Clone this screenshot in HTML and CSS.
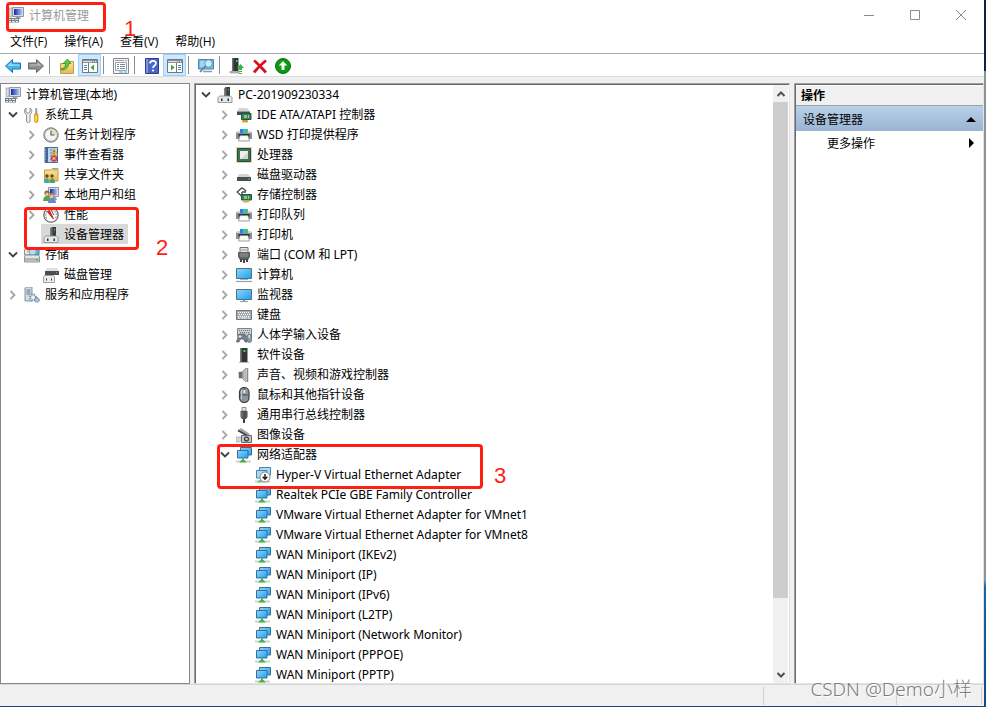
FILE: index.html
```html
<!DOCTYPE html>
<html lang="zh-CN">
<head>
    <meta charset="UTF-8">
    <meta name="viewport" content="width=device-width, initial-scale=1.0">
    <title>计算机管理</title>
    <link rel="stylesheet" href="styles.css">
</head>
<body>
    <svg class="sprite" aria-hidden="true">
        <defs>
            <linearGradient id="blue" x1="0" y1="0" x2="1" y2="1"><stop offset="0" stop-color="#8fd3fb"/><stop offset="1" stop-color="#1ea0f2"/></linearGradient>
            <linearGradient id="navy" x1="0" y1="0" x2="1" y2="0"><stop offset="0" stop-color="#1226a8"/><stop offset="1" stop-color="#a9c6f5"/></linearGradient>
            <linearGradient id="metal" x1="0" y1="0" x2="1" y2="0"><stop offset="0" stop-color="#5c5c5c"/><stop offset="1" stop-color="#d8d8d8"/></linearGradient>
            <linearGradient id="gold" x1="0" y1="0" x2="0" y2="1"><stop offset="0" stop-color="#fbe7a2"/><stop offset="1" stop-color="#e6bb52"/></linearGradient>
        </defs>
        <symbol id="open" viewBox="0 0 16 16"><path d="M4 5.500l4 4 4-4" fill="none" stroke="#404040" stroke-width="1.8"/></symbol>
        <symbol id="closed" viewBox="0 0 16 16"><path d="M5.500 4l4 4-4 4" fill="none" stroke="#a6a6a6" stroke-width="1.800"/></symbol>
        <symbol id="computer" viewBox="0 0 16 16">
            <path d="M1 1h3v9H1z" fill="#d9dde2" stroke="#8b9299" stroke-width=".6"/>
            <path d="M4.500.5h11v9h-11z" fill="#d8dde3" stroke="#8f979f"/><path d="M6 2h8v6H6z" fill="url(#navy)"/>
            <path d="M8 10h4l1 2H7z" fill="#9aa1a8"/><path d="M0 11h11v4.500H0z" fill="#777e85"/><path d="M1 12h2v1H1zm3 0h2v1H4zm3 0h3v1H7zM1 14h2v1H1zm3 0h3v1H4zm4 0h2v1H8z" fill="#e5e8eb"/>
        </symbol>
        <symbol id="tools" viewBox="0 0 16 16">
            <path d="M2 1v4l2 1.500 2-1.500V1c2 1 2.500 4 .7 6L6 8v6.500c0 1.300-3.500 1.300-3.500 0V8L1.500 7C0 5 .3 2 2 1z" fill="#eceeef" stroke="#7d8489" stroke-width=".9"/>
            <path d="M11.500 1.500h1.500v6h-1.500z" fill="#a5a9ad" stroke="#777" stroke-width=".4"/><path d="M10.500 7h3.500v7.500l-1 1h-1.500l-1-1z" fill="#f7b816" stroke="#c98c06" stroke-width=".7"/><path d="M12 9v5" stroke="#fff0a0"/>
        </symbol>
        <symbol id="clock" viewBox="0 0 16 16"><circle cx="8" cy="8" r="7.200" fill="#b5b5b5" stroke="#7d7d7d"/><circle cx="8" cy="8" r="5.800" fill="#f2f4f6"/><path d="M8 8V2.400A5.600 5.600 0 0 1 13.600 8z" fill="#f0dfb4"/><path d="M8 3.500V8h3.500" fill="none" stroke="#555" stroke-width="1.100"/></symbol>
        <symbol id="events" viewBox="0 0 16 16"><path d="M2 .5h12.500v15H2z" fill="#b8d5f2" stroke="#466a9c"/><path d="M2 1h3v14H2z" fill="#46659c"/><path d="M1 3h2M1 6h2M1 9h2M1 12h2" stroke="#a8bdd6"/><path d="M7 3h2M7 6h2M7 9h2M7 12h2" stroke="#5379b5"/><path d="M11 1.500l3.500 6h-6z" fill="#f9cf34" stroke="#c29413" stroke-width=".5"/><path d="M11 3.500v2M11 6.200v.8" stroke="#333"/><circle cx="11" cy="11.500" r="3.200" fill="#d93e3a"/><path d="M9.800 10.300l2.400 2.400m0-2.400l-2.400 2.400" stroke="#fff"/></symbol>
        <symbol id="shared" viewBox="0 0 16 16"><path d="M1.500 3h7l1-1.500h5.500V14H1.500z" fill="url(#gold)" stroke="#c69a38"/><path d="M10 3h4" stroke="#67a5da"/><circle cx="4" cy="9" r="1.700" fill="#6e4227"/><circle cx="9" cy="9" r="1.700" fill="#6e4227"/><path d="M1 16c0-6.500 5.500-6.500 5.500 0z" fill="#49a3ae"/><path d="M6.500 16c0-6.500 5.500-6.500 5.500 0z" fill="#4ba560"/></symbol>
        <symbol id="users" viewBox="0 0 16 16"><path d="M5.500.5h10v9h-10z" fill="#d8dde3" stroke="#8f979f"/><path d="M7 2h7v6H7z" fill="url(#navy)"/><path d="M9 10h4l1 3H9z" fill="#9aa1a8"/><circle cx="4" cy="6" r="2.600" fill="#8d6039"/><circle cx="4" cy="7" r="1.600" fill="#f1c8a3"/><path d="M0 14c0-7 8-7 8 0z" fill="#57a455"/><circle cx="9" cy="8" r="2.300" fill="#ac7a35"/><circle cx="9" cy="9" r="1.500" fill="#f1c8a3"/><path d="M5 16c0-7 8-7 8 0z" fill="#6789c8"/></symbol>
        <symbol id="gauge" viewBox="0 0 16 16"><circle cx="8" cy="8" r="7.200" fill="#fff" stroke="#666" stroke-width="1.200"/><path d="M3.700 11.500a5.400 5.400 0 1 1 8.600 0" fill="none" stroke="#aaa" stroke-width="1.500" stroke-dasharray="2 1"/><path d="M4.500 4.500l6 7.500L6.500 4z" fill="#d32020" stroke="#d32020" stroke-width="1.200"/><path d="M8 3l3 5" stroke="#555"/></symbol>
        <symbol id="device" viewBox="0 0 16 16"><path d="M7.500 1l2-1H13v9H7.500z" fill="#3b3e40"/><path d="M7.500 1l2-1v9h-2z" fill="#696d70"/><path d="M11 2h1v1.500h-1z" fill="#29e339"/><path d="M2.500 9h11l1.500 1.500V15.500H1v-5z" fill="#e6e7e8" stroke="#858789" stroke-width=".8"/><path d="M4 11.500h1.500V14H4zm6.500 0H12V14h-1.500z" fill="#333"/></symbol>
        <symbol id="storage" viewBox="0 0 16 16"><path d="M.5 3l2-2h8v7h-10z" fill="#e9eaeb" stroke="#8b8e90"/><path d="M3 1h4v5H3z" fill="#bfc3c5"/><path d="M6 2.500h9V8H6z" fill="#59b8e8" stroke="#3d799a"/><circle cx="8.500" cy="5" r="3" fill="#c7e7f4" opacity=".8"/><path d="M1.500 8h13l1 2v5H.5v-5z" fill="#e4e5e6" stroke="#777a7d" stroke-width=".8"/><path d="M1 11h14v3.500H1z" fill="#b5b8ba"/><path d="M12 12h2v1.500h-2z" fill="#28d136"/></symbol>
        <symbol id="disks" viewBox="0 0 16 16"><path d="M4 1h10l2 4v3H2V5z" fill="#dedfe0"/><path d="M2 4h14v4H2z" fill="#4b4e50"/><path d="M13 5h1v1h-1z" fill="#29dc38"/><path d="M1.500 8.500h9l1 1.500v5.500H.5v-5.500z" fill="#ececec" stroke="#898b8d" stroke-width=".8"/><path d="M3 11.500h1v2H3zm5 0h1v2H8z" fill="#333"/></symbol>
        <symbol id="services" viewBox="0 0 16 16"><path d="M1 1l1.500-1H8v14H1z" fill="#d4dee7" stroke="#6c7a87" stroke-width=".8"/><path d="M2.500 3h4M2.500 5h4M2.500 7h4" stroke="#597287"/><circle cx="9" cy="10.500" r="3" fill="#d8e6f1" stroke="#7592aa" stroke-width="2" stroke-dasharray="1.400 1"/><circle cx="13" cy="13" r="2" fill="#b9d2e7" stroke="#5c8bb5" stroke-width="1.500" stroke-dasharray="1 .7"/><circle cx="9" cy="10.500" r="1" fill="#fff"/></symbol>
        <symbol id="ide" viewBox="0 0 16 16"><path d="M3 1h8l3 3.500H1z" fill="#d5d6d7"/><path d="M1 4.500h13V8H1z" fill="#4a4d4f"/><path d="M5.500 6.500h9.500v6H5.500z" fill="#368463" stroke="#1e583d"/><path d="M8 8h3v3H8z" fill="#96b7a5"/><path d="M12.500 8v3" stroke="#b3cf63"/><path d="M6 13h6v2.500H6z" fill="#e9a927"/><path d="M8 13v2m2-2v2" stroke="#a66a10" stroke-width=".5"/></symbol>
        <symbol id="printer" viewBox="0 0 16 16"><path d="M1.500 4h13l1.500 2v6H0V6z" fill="#8b9094"/><path d="M1.500 4h13l1 2H.5z" fill="#d0d4d6"/><path d="M4 2h8v4H4z" fill="#2d7ef0"/><path d="M7 2h2.500v4H7z" fill="#2bbfe4"/><path d="M9.500 2H12v4H9.500z" fill="#4dc94d"/><path d="M2.500 7h11v3h-11z" fill="#2f3234"/><path d="M4 8.500h8l1.500 5.500h-11z" fill="#fafafa" stroke="#85898c" stroke-width=".8"/></symbol>
        <symbol id="cpu" viewBox="0 0 16 16"><path d="M.5.5h15v15H.5z" fill="none" stroke="#c8a24a" stroke-dasharray="1 1"/><path d="M1.500 1.500h13v13h-13z" fill="#3b7558" stroke="#214f39"/><path d="M4 4h8v8H4z" fill="#eeefed"/><path d="M12 5v7H5z" fill="#d2d6d3"/></symbol>
        <symbol id="drive" viewBox="0 0 16 16"><path d="M3 7h9l3 3.500H1z" fill="#d3d4d6"/><path d="M1 10h14v4H1z" fill="#4c4e50"/><path d="M12 11.500h2v1h-2z" fill="#2bdc3a"/></symbol>
        <symbol id="storagectl" viewBox="0 0 16 16"><path d="M6 .7L10 4M6 .7L1.200 5 6 9.500M6 5h4M6 5v3" fill="none" stroke="#4c4f51" stroke-width="1.400"/><path d="M5.500 7.500h10v5.500h-10z" fill="#368463" stroke="#1e583d"/><path d="M8 9h3v3H8z" fill="#96b7a5"/><path d="M12.500 9v3" stroke="#b3cf63"/><path d="M7 13.500h6v2H7z" fill="#e9a927"/></symbol>
        <symbol id="port" viewBox="0 0 16 16"><path d="M4 .5h8V6H4z" fill="#e3e4e5" stroke="#707375"/><path d="M5.500 2.500h1v1h-1zm2 0h1v1h-1zm2 0h1v1h-1z" fill="#555"/><path d="M2 5h12v5l-2 3H4l-2-3z" fill="#606365"/><path d="M4 7h8M4 9h8" stroke="#999da0"/><path d="M4 12h2v3H4zm6 0h2v3h-2zM7 12h2v4H7z" fill="#404345"/></symbol>
        <symbol id="pc" viewBox="0 0 16 16"><path d="M.5 1.500h15v10H.5z" fill="url(#blue)" stroke="#4f7187"/><path d="M4 12h8v1H4z" fill="#a1b3c0"/><path d="M0 14.500h16" stroke="#8fa2b3" stroke-width="1.200"/></symbol>
        <symbol id="monitor" viewBox="0 0 16 16"><path d="M.5 2.500h15v10H.5z" fill="url(#blue)" stroke="#4f7187"/><path d="M7 13h2v1H7z" fill="#8797a3"/><path d="M4 14.500h8" stroke="#8fa2b3"/></symbol>
        <symbol id="keyboard" viewBox="0 0 16 16"><path d="M.5 3.500h15v9H.5z" fill="#a4abb1" stroke="#73797e"/><path d="M2 5.500h12M3 7.500h11M2 9.500h12" stroke="#fff" stroke-dasharray="1 1"/><path d="M2 11h2m1 0h6m1 0h2" stroke="#f7f7f7"/></symbol>
        <symbol id="hid" viewBox="0 0 16 16"><path d="M1.500 1.500h14v8h-14z" fill="#ced2d5" stroke="#7c8287"/><path d="M3 3.500h11M4 5.500h10" stroke="#666c70" stroke-dasharray="1 1"/><path d="M3 7h6l2 8H9l-1.500-3h-3L3 15H.5z" fill="#74838f" stroke="#4f5a63" stroke-width=".7"/><path d="M4 8v3M2.500 9.500h3" stroke="#e7eef3"/><path d="M11 9c0-2.500 4.500-2.500 4.500 0v4.500c0 2.500-4.500 2.500-4.500 0z" fill="#8c9aa5" stroke="#4d5961" stroke-width=".7"/><path d="M13.200 8v3" stroke="#fff"/></symbol>
        <symbol id="software" viewBox="0 0 16 16"><path d="M4.500 1h7v14h-7z" fill="#333638"/><path d="M4.500 1H6v14H4.500z" fill="#5d6062"/><path d="M7.500 3h2v2h-2z" fill="#2fe73e"/><path d="M3 15.500h10" stroke="#b6b8ba"/></symbol>
        <symbol id="sound" viewBox="0 0 16 16"><path d="M3 5h3l4-4v14l-4-4H3z" fill="url(#metal)" stroke="#888" stroke-width=".7"/><path d="M3 5h3v6H3z" fill="#6a6d70"/><path d="M11.500 1v14" stroke="#858a8e" stroke-width="1.500"/></symbol>
        <symbol id="mouse" viewBox="0 0 16 16"><rect x="3.500" y=".5" width="9.500" height="15" rx="4.700" fill="#8b969f" stroke="#393e42" stroke-width="1.200"/><path d="M8.200 1v7M4 8h8.500" stroke="#42494e" stroke-width=".8"/><path d="M7.300 3h2v3.500h-2z" fill="#dfe4e8"/><path d="M5.500 3v9" stroke="#c7cdd1"/></symbol>
        <symbol id="usb" viewBox="0 0 16 16"><path d="M6 .5h4V4H6z" fill="#e2e3e4" stroke="#777" stroke-width=".8"/><path d="M4.500 4h7v6L10 12H6l-1.500-2z" fill="#505355"/><path d="M6 5v5" stroke="#85898c"/><path d="M7 12h2v4H7z" fill="#3b3e40"/></symbol>
        <symbol id="imaging" viewBox="0 0 16 16"><path d="M2 3l3-2 9 6-2 2z" fill="#a3a7aa"/><path d="M2 3.500l9 5" stroke="#393c3e" stroke-width="1.500"/><path d="M0 10h6v3l-3 2H0z" fill="#d5d7d9" stroke="#96999b" stroke-width=".6"/><path d="M5.500 8.500h10v7h-10z" fill="#c3c6c8" stroke="#66696b"/><circle cx="10.500" cy="12" r="2.600" fill="#393c3e"/><circle cx="10.500" cy="12" r="1.200" fill="#d9dde0"/></symbol>
        <symbol id="network" viewBox="0 0 16 16"><path d="M4.500.5h11v7.500h-11z" fill="url(#blue)" stroke="#386f93"/><path d="M1.500 3.500h10.500V11H1.500z" fill="url(#blue)" stroke="#386f93"/><path d="M6 11.500h2v2H6z" fill="#43a948"/><path d="M0 13.500h15v2H0z" fill="#cfd2d3"/><path d="M3.500 15l2-2h3l2 2v.5h-7z" fill="#3db74b"/></symbol>
        <symbol id="network-off" viewBox="0 0 16 16"><path d="M4.500.5h11v7.500h-11z" fill="#a9dcf8" stroke="#4b86a9"/><path d="M1.500 3.500h10.500V11H1.500z" fill="#a9dcf8" stroke="#4b86a9"/><path d="M0 13.500h15v2H0z" fill="#cfd2d3"/><path d="M2 15l2-2h3v2.500H2z" fill="#7fc487"/><circle cx="10" cy="10" r="5" fill="#fff" stroke="#858585"/><path d="M10 7v5M7.700 9.800L10 12.200l2.300-2.400" fill="none" stroke="#222" stroke-width="1.500"/></symbol>
        <symbol id="back" viewBox="0 0 16 16"><path d="M.5 8L7.500 1.500V5h8v6h-8v3.500z" fill="#45b6f2" stroke="#1b75ad"/><path d="M2.500 8L6.500 4.500V6.500h8v1z" fill="#a5def9"/></symbol>
        <symbol id="forward" viewBox="0 0 16 16"><path d="M15.500 8L8.500 1.500V5h-8v6h8v3.500z" fill="#8d9092" stroke="#626567"/><path d="M13.500 7.500L9.500 4.500v2h-8v1z" fill="#bfc1c2"/></symbol>
        <symbol id="folderup" viewBox="0 0 16 16"><path d="M1.500 5.500h5l1-2h7v12h-13z" fill="url(#gold)" stroke="#c09a48"/><path d="M2.500 10.500c3 0 4-2 4-5H4L8.500 1 12 5.500h-2.500c0 4-2.500 6.500-7 6.500z" fill="#5dc93e" stroke="#33841f" stroke-width=".7"/></symbol>
        <symbol id="treepane" viewBox="0 0 16 16"><path d="M.5 1.500h15v13H.5z" fill="#fff" stroke="#73787e"/><path d="M1 2h14v3H1z" fill="#8a9096"/><path d="M1 3.500h9m1 0h1m1 0h1" stroke="#dfe3e6"/><path d="M6.500 5v9" stroke="#73787e"/><path d="M2 7.500h3M2 9.500h3M2 11.500h3" stroke="#4f7fae"/><path d="M12 6.500v6l-3.500-3z" fill="#3ca22c"/></symbol>
        <symbol id="actionpane" viewBox="0 0 16 16"><path d="M.5 1.500h15v13H.5z" fill="#fff" stroke="#73787e"/><path d="M1 2h14v3H1z" fill="#8a9096"/><path d="M1 3.500h9m1 0h1m1 0h1" stroke="#dfe3e6"/><path d="M9.500 5v9" stroke="#73787e"/><path d="M11 7.500h3M11 9.500h3M11 11.500h3" stroke="#4f7fae"/><path d="M4 6.500v6l3.500-3z" fill="#3ca22c"/></symbol>
        <symbol id="props" viewBox="0 0 16 16"><path d="M.5.5h15v15H.5z" fill="#f5f6f7" stroke="#85898d"/><path d="M2 2.500h9m1 0h2" stroke="#9ea3a8"/><path d="M2.500 4.500h11v8h-11z" fill="#fff" stroke="#9ea3a8"/><path d="M4 6.500h2m1 0h5M4 8.500h2m1 0h5M4 10.500h2m1 0h5" stroke="#788898"/><path d="M6 14h4m1 0h3" stroke="#4db4dd"/></symbol>
        <symbol id="help" viewBox="0 0 16 16"><path d="M1.500.5h13v15h-13z" fill="#4766c6" stroke="#283f8b"/><path d="M2 1h2v14H2z" fill="#8094dc"/><path d="M6 5.500C6 2 12 2 12 5.300 12 7.500 9 7.500 9 10" fill="none" stroke="#fff" stroke-width="1.700"/><circle cx="9" cy="12.500" r="1.100" fill="#fff"/></symbol>
        <symbol id="scan" viewBox="0 0 16 16"><path d="M.5 1.500h15v9.500H.5z" fill="#69bce9" stroke="#4886ab"/><path d="M2 3h6v6H2z" fill="#9cd6f4"/><path d="M5 13.500h9" stroke="#8b9aa5" stroke-width="1.500"/><circle cx="10.500" cy="5.500" r="3.800" fill="#c8e9fa" stroke="#7395a9"/><path d="M7.500 8L2 14" stroke="#637b8a" stroke-width="1.700"/></symbol>
        <symbol id="update" viewBox="0 0 16 16"><path d="M3 0h6.500v13H3z" fill="#333638"/><path d="M3 0h1.500v13H3z" fill="#6d7072"/><path d="M7 2h1.500v2H7z" fill="#31df3f"/><path d="M1 13.500h9V15H1z" fill="#babdbf" stroke="#777" stroke-width=".5"/><path d="M11.500 6L15 10h-2v2h-3v-2H8z" fill="#35b63d"/><path d="M10 13h3v1h-3zm0 2h3v1h-3z" fill="#35b63d"/></symbol>
        <symbol id="remove" viewBox="0 0 16 16"><path d="M2 2.500c4 3 8 8 12 12M14 2.500C9.500 6 5.500 10 2 14.500" fill="none" stroke="#d90e1e" stroke-width="2.800"/></symbol>
        <symbol id="enable" viewBox="0 0 16 16"><circle cx="8" cy="8" r="7.500" fill="#0b9a10" stroke="#087008"/><path d="M8 3l4.300 4.500H9.500V12h-3V7.500H3.700z" fill="#fff"/></symbol>
    </svg>

    <div class="window">
        <header class="titlebar">
            <svg class="icon"><use href="#computer"/></svg>
            <h1>计算机管理</h1>
            <div class="controls">
                <button type="button" aria-label="最小化"><svg viewBox="0 0 10 10"><path d="M0 5.500h10"/></svg></button>
                <button type="button" aria-label="最大化"><svg viewBox="0 0 10 10"><path d="M.5.5h9v9h-9z"/></svg></button>
                <button type="button" aria-label="关闭"><svg viewBox="0 0 10 10"><path d="M0 0l10 10M10 0L0 10"/></svg></button>
            </div>
        </header>
        <nav class="menubar">
            <button type="button">文件(F)</button>
            <button type="button">操作(A)</button>
            <button type="button">查看(V)</button>
            <button type="button">帮助(H)</button>
        </nav>
        <div class="toolbar">
            <button type="button" aria-label="后退"><svg class="icon"><use href="#back"/></svg></button>
            <button type="button" aria-label="前进"><svg class="icon"><use href="#forward"/></svg></button>
            <span class="sep"></span>
            <button type="button" aria-label="上一级"><svg class="icon"><use href="#folderup"/></svg></button>
            <button type="button" class="on" aria-label="控制台树"><svg class="icon"><use href="#treepane"/></svg></button>
            <span class="sep"></span>
            <button type="button" aria-label="属性"><svg class="icon"><use href="#props"/></svg></button>
            <span class="sep"></span>
            <button type="button" aria-label="帮助"><svg class="icon"><use href="#help"/></svg></button>
            <button type="button" class="on" aria-label="操作窗格"><svg class="icon"><use href="#actionpane"/></svg></button>
            <span class="sep"></span>
            <button type="button" aria-label="扫描硬件改动"><svg class="icon"><use href="#scan"/></svg></button>
            <span class="sep"></span>
            <button type="button" aria-label="更新驱动程序"><svg class="icon"><use href="#update"/></svg></button>
            <button type="button" aria-label="卸载设备"><svg class="icon"><use href="#remove"/></svg></button>
            <button type="button" aria-label="启用设备"><svg class="icon"><use href="#enable"/></svg></button>
        </div>

        <main class="panes">
            <section class="pane nav-pane">
                <ul class="tree">
                    <li>
                        <div class="row root"><span class="label"><svg class="icon"><use href="#computer"/></svg>计算机管理(本地)</span></div>
                        <ul class="top">
                            <li>
                                <div class="row"><button class="toggle" type="button" aria-label="折叠"><svg class="icon"><use href="#open"/></svg></button><span class="label"><svg class="icon"><use href="#tools"/></svg>系统工具</span></div>
                                <ul>
                                    <li class="row"><button class="toggle" type="button" aria-label="展开"><svg class="icon"><use href="#closed"/></svg></button><span class="label"><svg class="icon"><use href="#clock"/></svg>任务计划程序</span></li>
                                    <li class="row"><button class="toggle" type="button" aria-label="展开"><svg class="icon"><use href="#closed"/></svg></button><span class="label"><svg class="icon"><use href="#events"/></svg>事件查看器</span></li>
                                    <li class="row"><button class="toggle" type="button" aria-label="展开"><svg class="icon"><use href="#closed"/></svg></button><span class="label"><svg class="icon"><use href="#shared"/></svg>共享文件夹</span></li>
                                    <li class="row"><button class="toggle" type="button" aria-label="展开"><svg class="icon"><use href="#closed"/></svg></button><span class="label"><svg class="icon"><use href="#users"/></svg>本地用户和组</span></li>
                                    <li class="row"><button class="toggle" type="button" aria-label="展开"><svg class="icon"><use href="#closed"/></svg></button><span class="label"><svg class="icon"><use href="#gauge"/></svg>性能</span></li>
                                    <li class="row"><span class="toggle"></span><span class="label selected"><svg class="icon"><use href="#device"/></svg>设备管理器</span></li>
                                </ul>
                            </li>
                            <li>
                                <div class="row"><button class="toggle" type="button" aria-label="折叠"><svg class="icon"><use href="#open"/></svg></button><span class="label"><svg class="icon"><use href="#storage"/></svg>存储</span></div>
                                <ul>
                                    <li class="row"><span class="toggle"></span><span class="label"><svg class="icon"><use href="#disks"/></svg>磁盘管理</span></li>
                                </ul>
                            </li>
                            <li class="row"><button class="toggle" type="button" aria-label="展开"><svg class="icon"><use href="#closed"/></svg></button><span class="label"><svg class="icon"><use href="#services"/></svg>服务和应用程序</span></li>
                        </ul>
                    </li>
                </ul>
            </section>

            <section class="pane device-pane">
                <ul class="tree devices">
                    <li>
                        <div class="row"><button class="toggle" type="button" aria-label="折叠"><svg class="icon"><use href="#open"/></svg></button><span class="label"><svg class="icon"><use href="#device"/></svg>PC-201909230334</span></div>
                        <ul>
                            <li class="row"><button class="toggle" type="button" aria-label="展开"><svg class="icon"><use href="#closed"/></svg></button><span class="label"><svg class="icon"><use href="#ide"/></svg>IDE ATA/ATAPI 控制器</span></li>
                            <li class="row"><button class="toggle" type="button" aria-label="展开"><svg class="icon"><use href="#closed"/></svg></button><span class="label"><svg class="icon"><use href="#printer"/></svg>WSD 打印提供程序</span></li>
                            <li class="row"><button class="toggle" type="button" aria-label="展开"><svg class="icon"><use href="#closed"/></svg></button><span class="label"><svg class="icon"><use href="#cpu"/></svg>处理器</span></li>
                            <li class="row"><button class="toggle" type="button" aria-label="展开"><svg class="icon"><use href="#closed"/></svg></button><span class="label"><svg class="icon"><use href="#drive"/></svg>磁盘驱动器</span></li>
                            <li class="row"><button class="toggle" type="button" aria-label="展开"><svg class="icon"><use href="#closed"/></svg></button><span class="label"><svg class="icon"><use href="#storagectl"/></svg>存储控制器</span></li>
                            <li class="row"><button class="toggle" type="button" aria-label="展开"><svg class="icon"><use href="#closed"/></svg></button><span class="label"><svg class="icon"><use href="#printer"/></svg>打印队列</span></li>
                            <li class="row"><button class="toggle" type="button" aria-label="展开"><svg class="icon"><use href="#closed"/></svg></button><span class="label"><svg class="icon"><use href="#printer"/></svg>打印机</span></li>
                            <li class="row"><button class="toggle" type="button" aria-label="展开"><svg class="icon"><use href="#closed"/></svg></button><span class="label"><svg class="icon"><use href="#port"/></svg>端口 (COM 和 LPT)</span></li>
                            <li class="row"><button class="toggle" type="button" aria-label="展开"><svg class="icon"><use href="#closed"/></svg></button><span class="label"><svg class="icon"><use href="#pc"/></svg>计算机</span></li>
                            <li class="row"><button class="toggle" type="button" aria-label="展开"><svg class="icon"><use href="#closed"/></svg></button><span class="label"><svg class="icon"><use href="#monitor"/></svg>监视器</span></li>
                            <li class="row"><button class="toggle" type="button" aria-label="展开"><svg class="icon"><use href="#closed"/></svg></button><span class="label"><svg class="icon"><use href="#keyboard"/></svg>键盘</span></li>
                            <li class="row"><button class="toggle" type="button" aria-label="展开"><svg class="icon"><use href="#closed"/></svg></button><span class="label"><svg class="icon"><use href="#hid"/></svg>人体学输入设备</span></li>
                            <li class="row"><button class="toggle" type="button" aria-label="展开"><svg class="icon"><use href="#closed"/></svg></button><span class="label"><svg class="icon"><use href="#software"/></svg>软件设备</span></li>
                            <li class="row"><button class="toggle" type="button" aria-label="展开"><svg class="icon"><use href="#closed"/></svg></button><span class="label"><svg class="icon"><use href="#sound"/></svg>声音、视频和游戏控制器</span></li>
                            <li class="row"><button class="toggle" type="button" aria-label="展开"><svg class="icon"><use href="#closed"/></svg></button><span class="label"><svg class="icon"><use href="#mouse"/></svg>鼠标和其他指针设备</span></li>
                            <li class="row"><button class="toggle" type="button" aria-label="展开"><svg class="icon"><use href="#closed"/></svg></button><span class="label"><svg class="icon"><use href="#usb"/></svg>通用串行总线控制器</span></li>
                            <li class="row"><button class="toggle" type="button" aria-label="展开"><svg class="icon"><use href="#closed"/></svg></button><span class="label"><svg class="icon"><use href="#imaging"/></svg>图像设备</span></li>
                            <li>
                                <div class="row"><button class="toggle" type="button" aria-label="折叠"><svg class="icon"><use href="#open"/></svg></button><span class="label"><svg class="icon"><use href="#network"/></svg>网络适配器</span></div>
                                <ul>
                                    <li class="row"><span class="toggle"></span><span class="label"><svg class="icon"><use href="#network-off"/></svg>Hyper-V Virtual Ethernet Adapter</span></li>
                                    <li class="row"><span class="toggle"></span><span class="label"><svg class="icon"><use href="#network"/></svg>Realtek PCIe GBE Family Controller</span></li>
                                    <li class="row"><span class="toggle"></span><span class="label"><svg class="icon"><use href="#network"/></svg>VMware Virtual Ethernet Adapter for VMnet1</span></li>
                                    <li class="row"><span class="toggle"></span><span class="label"><svg class="icon"><use href="#network"/></svg>VMware Virtual Ethernet Adapter for VMnet8</span></li>
                                    <li class="row"><span class="toggle"></span><span class="label"><svg class="icon"><use href="#network"/></svg>WAN Miniport (IKEv2)</span></li>
                                    <li class="row"><span class="toggle"></span><span class="label"><svg class="icon"><use href="#network"/></svg>WAN Miniport (IP)</span></li>
                                    <li class="row"><span class="toggle"></span><span class="label"><svg class="icon"><use href="#network"/></svg>WAN Miniport (IPv6)</span></li>
                                    <li class="row"><span class="toggle"></span><span class="label"><svg class="icon"><use href="#network"/></svg>WAN Miniport (L2TP)</span></li>
                                    <li class="row"><span class="toggle"></span><span class="label"><svg class="icon"><use href="#network"/></svg>WAN Miniport (Network Monitor)</span></li>
                                    <li class="row"><span class="toggle"></span><span class="label"><svg class="icon"><use href="#network"/></svg>WAN Miniport (PPPOE)</span></li>
                                    <li class="row"><span class="toggle"></span><span class="label"><svg class="icon"><use href="#network"/></svg>WAN Miniport (PPTP)</span></li>
                                </ul>
                            </li>
                        </ul>
                    </li>
                </ul>
                <div class="scrollbar">
                    <button type="button" aria-label="向上滚动"><svg viewBox="0 0 10 10"><path d="M1.500 7L5 3.500 8.500 7"/></svg></button>
                    <div class="track"><div class="thumb"></div></div>
                    <button type="button" aria-label="向下滚动"><svg viewBox="0 0 10 10"><path d="M1.500 3L5 6.500 8.500 3"/></svg></button>
                </div>
            </section>

            <aside class="pane action-pane">
                <h2>操作</h2>
                <button type="button" class="group">设备管理器<svg viewBox="0 0 10 10"><path d="M0 8l5-5 5 5z"/></svg></button>
                <button type="button" class="more">更多操作<svg viewBox="0 0 10 10"><path d="M3 0l5 5-5 5z"/></svg></button>
            </aside>
        </main>

        <footer class="statusbar"><span></span><span></span><span></span></footer>
    </div>

    <div class="mark mark-title"></div><span class="num num-title">1</span>
    <div class="mark mark-manager"></div><span class="num num-manager">2</span>
    <div class="mark mark-adapter"></div><span class="num num-adapter">3</span>
    <p class="watermark">CSDN @Demo小样</p>
</body>
</html>
```
FILE: styles.css
```css
* {
    box-sizing: border-box;
}
body {
    position: relative;
    margin: 0;
    height: 100vh;
    overflow: hidden;
    padding: 0 2px 1px 0;
    background: linear-gradient(to bottom, #0b2347 0, #0b2347 10%, #8b9298 10%, #8b9298 82%, #1266ab 83%, #174a7d 100%);
    font-family: "Noto Sans", "Noto Sans CJK SC", sans-serif;
    font-size: 12px;
    color: #000;
}
ul, h1, h2, p {
    margin: 0;
    padding: 0;
    list-style: none;
    font-size: 12px;
    font-weight: normal;
}
button {
    border: none;
    padding: 0;
    background: none;
    font: inherit;
    color: inherit;
}
.sprite {
    position: absolute;
    width: 0;
    height: 0;
}
.icon {
    display: block;
    flex: none;
    width: 16px;
    height: 16px;
}
.window {
    display: flex;
    flex-direction: column;
    height: 100%;
    background: #f0f0f0;
}

/* title and menu */
.titlebar {
    display: flex;
    align-items: center;
    height: 29px;
    padding-left: 8px;
    background: #fff;
    color: #999;
}
.titlebar h1 {
    margin-left: 5px;
}
.controls {
    display: flex;
    margin-left: auto;
}
.controls button {
    display: flex;
    align-items: center;
    justify-content: center;
    width: 46px;
    height: 29px;
}
.controls svg {
    width: 10px;
    height: 10px;
    fill: none;
    stroke: #8c8c8c;
}
.menubar {
    display: flex;
    gap: 17px;
    height: 25px;
    padding: 0 10px;
    background: #fff;
    border-bottom: 1px solid #a5aab3;
    font-family: "Open Sans", "Noto Sans CJK SC", sans-serif;
}
.toolbar {
    display: flex;
    align-items: center;
    height: 23px;
    padding-left: 1px;
    background: #fff;
    border-bottom: 1px solid #dcdcdc;
}
.toolbar button {
    display: flex;
    align-items: center;
    justify-content: center;
    width: 23px;
    height: 22px;
}
.toolbar .on {
    background: #cce8ff;
    border: 1px solid #99d1ff;
}
.toolbar .icon {
    margin-top: 2px;
}
.sep {
    width: 1px;
    height: 18px;
    margin: 0 5px 0 2px;
    background: #8d8d8d;
}

/* three panes */
.panes {
    display: grid;
    grid-template-columns: 190px 1fr 190px;
    gap: 4px;
    flex: 1;
    min-height: 0;
    padding-top: 6px;
}
.pane {
    background: #fff;
    overflow: hidden;
    min-width: 0;
}
.nav-pane {
    border: 1px solid #828790;
}
.device-pane,
.action-pane {
    border: 1px solid #e3e3e3;
    border-top-color: #a0a0a0;
    border-left-color: #a0a0a0;
    box-shadow: inset 1px 1px #696969;
}
.device-pane {
    display: flex;
    padding-right: 1px;
}
.devices {
    flex: 1;
    min-width: 0;
    padding-left: 3px;
}
.tree ul {
    padding-left: 19px;
}
.tree ul.top {
    padding-left: 4px;
}
.tree .icon {
    margin-top: 2px;
}
.row {
    display: flex;
    height: 20px;
    white-space: nowrap;
}
.root {
    padding-left: 2px;
}
.toggle {
    width: 17px;
    flex: none;
    display: flex;
    align-items: center;
}
.label {
    display: flex;
    align-items: center;
    gap: 5px;
    padding: 0 4px 0 2px;
}
.selected {
    background: #d9d9d9;
}
.scrollbar {
    display: flex;
    flex-direction: column;
    width: 15px;
    margin-top: 1px;
    background: #f0f0f0;
}
.scrollbar button {
    display: flex;
    align-items: center;
    justify-content: center;
    height: 17px;
}
.scrollbar svg {
    width: 10px;
    height: 10px;
    fill: none;
    stroke: #505050;
    stroke-width: 2;
}
.track {
    flex: 1;
}
.thumb {
    height: 88%;
    background: #cdcdcd;
}

/* actions */
.action-pane {
    display: flex;
    flex-direction: column;
    padding: 2px 0 0 1px;
}
.action-pane h2 {
    height: 20px;
    padding-left: 5px;
    line-height: 20px;
    font-weight: bold;
    background: #f0f0f0;
    border-bottom: 1px solid #a0a0a0;
}
.action-pane button {
    display: flex;
    align-items: center;
    justify-content: space-between;
    height: 24px;
    padding: 0 7px;
}
.action-pane svg {
    width: 10px;
    height: 10px;
}
.action-pane .group {
    height: 25px;
    background: linear-gradient(#b9d1ea, #99b4d1);
}
.action-pane .more {
    padding-left: 31px;
}

.statusbar {
    display: flex;
    justify-content: flex-end;
    height: 22px;
    padding: 2px 2px 1px 0;
    border-top: 1px solid #d7d7d7;
}
.statusbar span {
    border-right: 1px solid #d0d0d0;
}
.statusbar span + span {
    width: 133px;
}
.statusbar span:last-child {
    width: 85px;
}

/* callouts drawn over the window */
.mark {
    position: absolute;
    border: 3px solid #ff1e10;
    border-radius: 4px;
}
.mark-title {
    left: 6px;
    top: 2px;
    width: 100px;
    height: 30px;
}
.mark-manager {
    left: 24px;
    top: 207px;
    width: 115px;
    height: 43px;
}
.mark-adapter {
    left: 217px;
    top: 444px;
    width: 266px;
    height: 45px;
}
.num {
    position: absolute;
    font-family: "Liberation Sans", sans-serif;
    font-size: 22px;
    line-height: 24px;
    color: #ff1e10;
}
.num-title {
    left: 124px;
    top: 17px;
}
.num-manager {
    left: 156px;
    top: 236px;
}
.num-adapter {
    left: 494px;
    top: 464px;
}
.watermark {
    position: absolute;
    right: 14px;
    bottom: 5px;
    font-size: 19px;
    line-height: 26px;
    font-weight: 300;
    color: #7c7c7c;
    text-shadow: 1px 1px #fff;
}
```
